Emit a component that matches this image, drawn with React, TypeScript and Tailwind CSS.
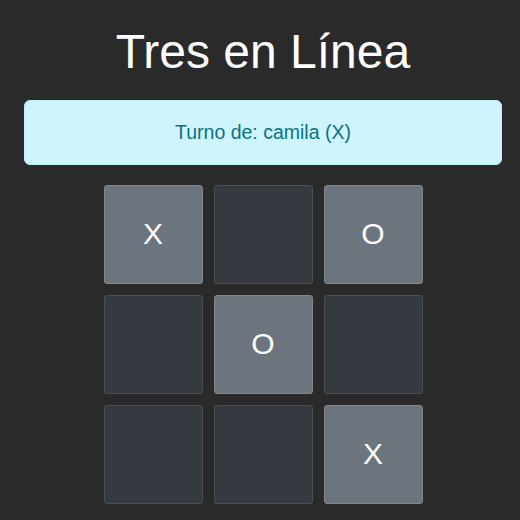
const board: (string | null)[] = ["X", null, "O", null, "O", null, null, null, "X"];

function Cell({ value }: { value: string | null }) {
  return (
    <button
      className={`flex h-[99px] w-[99px] items-center justify-center rounded-[3px] border text-[30px] leading-none text-white ${
        value ? "border-[#80878e] bg-[#6c757d]" : "border-[#4a5057] bg-[#343a40]"
      }`}
    >
      {value}
    </button>
  );
}

export default function App() {
  return (
    <div
      className="min-h-[520px] bg-[#2a2a2a] pt-[23px]"
      style={{ fontFamily: '"Liberation Sans", Arial, sans-serif' }}
    >
      <div className="ml-[24px] flex w-[478px] flex-col items-center">
        <h1 className="text-[48px] font-normal leading-[1.2] text-white">Tres en Línea</h1>
        <div className="mt-[19px] w-full rounded-[6px] border border-[#bdf0fb] bg-[#cff4fc] py-[17px] text-center text-[19.5px] leading-[1.5] text-[#0a7282]">
          Turno de: camila (X)
        </div>
        <div className="mt-[20px] grid grid-cols-[repeat(3,99px)] gap-[11px]">
          {board.map((v, i) => (
            <Cell key={i} value={v} />
          ))}
        </div>
      </div>
    </div>
  );
}
